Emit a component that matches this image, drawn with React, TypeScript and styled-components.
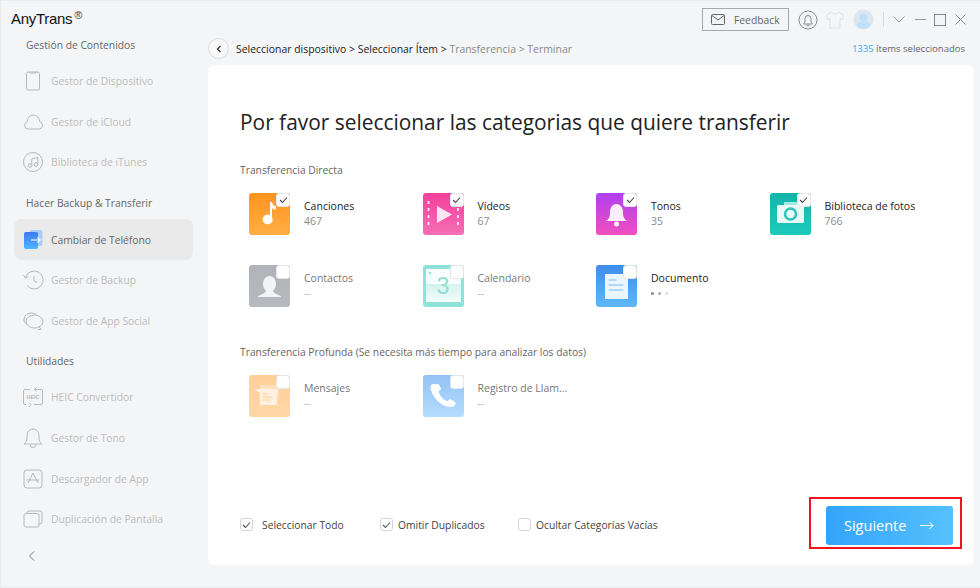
import { ReactNode } from "react";
import styled, { createGlobalStyle } from "styled-components";

const GlobalStyle = createGlobalStyle`
  html, body {
    margin: 0;
    padding: 0;
    background: #f4f5f7;
  }
  * {
    box-sizing: border-box;
  }
`;

const font = `"Open Sans", "Noto Sans", "Liberation Sans", sans-serif`;

function SideIcon({ children }: { children: ReactNode }) {
  return (
    <svg width="22" height="22" viewBox="0 0 22 22" fill="none" stroke="currentColor" strokeWidth="1">
      {children}
    </svg>
  );
}

const deviceIcon = (
  <SideIcon>
    <rect x="4.5" y="2" width="13" height="18" rx="1.5" />
    <path d="M8 2v1h6V2" />
  </SideIcon>
);
const cloudIcon = (
  <SideIcon>
    <path d="M5.5 18h11.5a3.6 3.6 0 0 0 .8-7.1A7 7 0 0 0 11 4a6.4 6.4 0 0 0-5.8 7A3.6 3.6 0 0 0 5.5 18z" />
  </SideIcon>
);
const musicIcon = (
  <SideIcon>
    <circle cx="11" cy="11" r="9.5" />
    <circle cx="8" cy="14.5" r="1.8" />
    <circle cx="14" cy="13.5" r="1.8" />
    <path d="M9.8 14.5V8l6-1.5v7" />
  </SideIcon>
);
const backupIcon = (
  <SideIcon>
    <path d="M3.5 8.5A9 9 0 1 1 5 16.5" />
    <path d="M1.5 6l2 3 3-1.5" />
    <path d="M12 7v5l3 1.5" />
  </SideIcon>
);
const socialIcon = (
  <SideIcon>
    <path d="M5 14.5C2.5 13 1.5 11 2 8.5 2.7 5 6 3 9.5 3c2.5 0 4.5 1 5.5 2.5" />
    <ellipse cx="12.5" cy="11.5" rx="8.5" ry="6.5" />
    <path d="M17 16.5l2 3h-3" />
  </SideIcon>
);
const heicIcon = (
  <SideIcon>
    <path d="M8 3.5H3a1.5 1.5 0 0 0-1.5 1.5v12A1.5 1.5 0 0 0 3 18.5h1M13 3.5h6A1.5 1.5 0 0 1 20.5 5v12a1.5 1.5 0 0 1-1.5 1.5h-7" />
    <path d="M14.5 1l-2 2.5 2 2M7 16.5l2 2-2 2.5" />
    <text x="11" y="13" fontFamily="Liberation Sans, sans-serif" fontSize="5.5" fontWeight="700" fill="currentColor" stroke="none" textAnchor="middle">
      HEIC
    </text>
  </SideIcon>
);
const bellIcon = (
  <SideIcon>
    <path d="M2 17c2-1.5 3-3 3-6V8a6 6 0 0 1 12 0v3c0 3 1 4.5 3 6z" />
    <path d="M8 17.5a3 3 0 0 0 6 0" />
  </SideIcon>
);
const storeIcon = (
  <SideIcon>
    <rect x="2" y="2" width="18" height="18" rx="3" />
    <path d="M11 5l-5 10M11 5l5 10M4.5 12h13" />
  </SideIcon>
);
const mirrorIcon = (
  <SideIcon>
    <rect x="2" y="5.5" width="15" height="13.5" rx="2" />
    <path d="M5 5.5V5a2 2 0 0 1 2-2h11a2 2 0 0 1 2 2v9a2 2 0 0 1-2 2h-1" />
  </SideIcon>
);
const phoneSwitchIcon = (
  <svg width="22" height="22" viewBox="0 0 22 22" fill="none">
    <defs>
      <linearGradient id="sw" x1="0" y1="0" x2="0" y2="1">
        <stop offset="0" stopColor="#3d79f2" />
        <stop offset="1" stopColor="#4fb6ff" />
      </linearGradient>
    </defs>
    <rect x="7.5" y="1" width="13" height="16" rx="2" fill="#a9cdf7" />
    <rect x="2" y="3" width="14" height="17" rx="2" fill="url(#sw)" />
    <path d="M9 11h9M15.5 8.5l2.5 2.5-2.5 2.5" stroke="#fff" strokeWidth="1.2" />
  </svg>
);

const songsArt = (
  <svg viewBox="0 0 41 41" width="41" height="41">
    <circle cx="18.7" cy="26.5" r="5" fill="#fff" />
    <path d="M21 27V9h2c.5 2.5 2 4 4 4.5v3c-1.5 0-3-.5-4-1.500V27z" fill="#fff" />
  </svg>
);
const videosArt = (
  <svg viewBox="0 0 41 41" width="41" height="41">
    <path d="M5.5 8v26M35 8v26" stroke="#fff" strokeWidth="1.6" strokeDasharray="3 4" />
    <path d="M14 13l15 8.5L14 30z" fill="#fff" opacity="0.85" />
  </svg>
);
const tonesArt = (
  <svg viewBox="0 0 41 41" width="41" height="41">
    <path d="M10 28c3-2 4-4 4-9 0-5 3-8 6.5-8S27 14 27 19c0 5 1 7 4 9z" fill="#fff" opacity="0.9" />
    <circle cx="20.5" cy="31" r="2.5" fill="#fff" opacity="0.9" />
  </svg>
);
const photosArt = (
  <svg viewBox="0 0 41 41" width="41" height="41">
    <rect x="14" y="9" width="15" height="3" fill="#9ee9e0" />
    <rect x="7" y="12" width="27" height="18" rx="1.5" fill="#e8faf7" />
    <circle cx="20.5" cy="21" r="5.5" fill="none" stroke="#2fc4b6" strokeWidth="2.5" />
  </svg>
);
const contactsArt = (
  <svg viewBox="0 0 41 41" width="41" height="41">
    <ellipse cx="20.5" cy="19" rx="6.5" ry="8" fill="#f3f4f5" />
    <path d="M8.5 32c3-3 8-3 9-7h6c1 4 6 4 9 7z" fill="#f3f4f5" />
  </svg>
);
const calendarArt = (
  <svg viewBox="0 0 41 41" width="41" height="41">
    <defs>
      <linearGradient id="cal" x1="0" y1="0" x2="0" y2="1">
        <stop offset="0" stopColor="#d3f3ee" />
        <stop offset="1" stopColor="#f4fdfb" />
      </linearGradient>
    </defs>
    <rect x="3" y="4" width="35" height="15" fill="#f6fdfc" />
    <rect x="3" y="19" width="35" height="18" fill="url(#cal)" />
    <circle cx="7" cy="8" r="1" fill="#6fd5c9" />
    <text x="20" y="29" fontFamily="Liberation Sans, sans-serif" fontSize="23" fill="#8fdfd6" textAnchor="middle">
      3
    </text>
  </svg>
);
const documentArt = (
  <svg viewBox="0 0 41 41" width="41" height="41">
    <rect x="9" y="9" width="23" height="25" fill="#eaf5fe" />
    <path d="M12.5 15h8M12.5 20h15M12.5 25h15" stroke="#7fbcf5" strokeWidth="1" />
  </svg>
);
const messagesArt = (
  <svg viewBox="0 0 41 41" width="41" height="41">
    <rect x="11" y="10" width="19" height="14" fill="#ffe0bc" />
    <path d="M5 14h23v16H11V18z" fill="#fff1df" />
    <path d="M13 19h6M13 22h11M13 25h8" stroke="#ffd09a" strokeWidth="1" />
  </svg>
);
const callsArt = (
  <svg viewBox="0 0 41 41" width="41" height="41">
    <path d="M10 9c-1 0-2 1-2.5 2.5C7 18 16 32 28 32c2 0 4-1 4.500-3 .2-1 0-2-1-2.500l-3.500-2c-1-.5-2-.2-2.500.5l-1 1.300c-4-1-8-6-9-10l1.500-1c1-.8 1-1.800.5-2.800l-2-3.500C12 9.500 11 9 10 9z" fill="#fff" />
  </svg>
);

const Shell = styled.div`
  width: 980px;
  height: 588px;
  display: grid;
  grid-template-columns: 207px 1fr;
  background: #f4f5f7;
  border: 1px solid #e9eaec;
  border-right: 0;
  font-family: ${font};
  overflow: hidden;
`;

const Sidebar = styled.aside`
  display: flex;
  flex-direction: column;
  padding-left: 13px;
  padding-right: 15px;
`;

const Logo = styled.div`
  height: 28px;
  margin-left: -3px;
  padding-top: 7px;
  font-family: "Liberation Sans", sans-serif;
  font-size: 15px;
  line-height: 22px;
  letter-spacing: -0.3px;
  color: #111;
  white-space: nowrap;

  sup {
    font-size: 11px;
    line-height: 0;
    margin-left: 2px;
    vertical-align: 5px;
    color: #444;
  }
`;

const GroupTitle = styled.div<{ $gap?: number }>`
  height: 32px;
  margin-top: ${(p) => p.$gap ?? 0}px;
  padding-left: 12px;
  font-size: 10.3px;
  line-height: 32px;
  color: #666;
`;

const NavItem = styled.div<{ $active?: boolean }>`
  height: 40.6px;
  display: flex;
  align-items: center;
  gap: 7px;
  padding-left: 8px;
  border-radius: 8px;
  font-size: 10.3px;
  color: ${(p) => (p.$active ? "#666" : "#bdbdbd")};
  background: ${(p) => (p.$active ? "#eaeaea" : "transparent")};

  svg {
    flex: none;
    color: #b8b8b8;
  }
`;

const CollapseRow = styled.div`
  margin-top: auto;
  height: 37px;
  padding-left: 13px;
  display: flex;
  align-items: flex-start;
  color: #777;
`;

const Main = styled.main`
  display: flex;
  flex-direction: column;
  padding-right: 6px;
  min-width: 0;
`;

const TitleBar = styled.div`
  height: 37px;
  padding-right: 8px;
  display: flex;
  align-items: center;
  justify-content: flex-end;
`;

const FeedbackButton = styled.button`
  width: 87px;
  height: 23px;
  padding: 0 0 0 8px;
  display: flex;
  align-items: center;
  gap: 9px;
  border: 1px solid #a9a9a9;
  background: #f4f5f7;
  font-family: ${font};
  font-size: 10.3px;
  color: #666;
`;

const BarIcon = styled.span<{ $left: number }>`
  display: flex;
  margin-left: ${(p) => p.$left}px;
  color: #8a8a8a;
`;

const Breadcrumb = styled.div`
  height: 27px;
  padding: 0 9px 6px 0;
  display: flex;
  align-items: center;
  justify-content: space-between;
  font-size: 10.45px;
  color: #222;
`;

const Trail = styled.div`
  display: flex;
  align-items: center;
  white-space: pre;
`;

const BackButton = styled.span`
  width: 21px;
  height: 21px;
  margin-right: 7px;
  display: flex;
  align-items: center;
  justify-content: center;
  border: 1px solid #dcdcdc;
  border-radius: 50%;
  background: #f8f8f8;
  color: #333;
`;

const MutedStep = styled.span`
  color: #8a8a8a;
`;

const Selected = styled.div`
  color: #666;
  font-size: 9.5px;

  b {
    font-weight: 400;
    color: #3aa7f5;
  }
`;

const Card = styled.section`
  flex: 1;
  display: flex;
  flex-direction: column;
  margin-bottom: 22px;
  padding: 42px 0 0 32px;
  background: #fff;
  border-radius: 6px;
`;

const Heading = styled.h1`
  margin: 0;
  font-size: 20.9px;
  line-height: 30px;
  font-weight: 400;
  color: #222;
`;

const SectionLabel = styled.div<{ $top: number }>`
  margin-top: ${(p) => p.$top}px;
  font-size: 10.3px;
  line-height: 16px;
  color: #666;
`;

const CategoryGrid = styled.div`
  margin-top: 15px;
  margin-left: 9px;
  display: grid;
  grid-template-columns: repeat(4, 173.5px);
  grid-auto-rows: 42px;
  row-gap: 30px;
`;

const Category = styled.div`
  display: flex;
  align-items: center;
  gap: 14px;
`;

const Tile = styled.div<{ $from: string; $to: string }>`
  position: relative;
  flex: none;
  width: 41px;
  height: 42px;
  border-radius: 3px;
  background: linear-gradient(${(p) => p.$from}, ${(p) => p.$to});

  svg {
    display: block;
  }
`;

const TileCheck = styled.span`
  position: absolute;
  top: 0;
  right: 0;
  width: 14px;
  height: 14px;
  display: flex;
  align-items: center;
  justify-content: center;
  background: #fff;
  border: 1px solid #e4e6e8;
  border-radius: 3px;
  color: #444;

  svg {
    display: block;
  }
`;

const CategoryText = styled.div`
  display: flex;
  flex-direction: column;
`;

const CategoryName = styled.div<{ $off?: boolean }>`
  font-size: 10.5px;
  line-height: 15px;
  color: ${(p) => (p.$off ? "#777" : "#1c1c1c")};
  white-space: nowrap;
`;

const CategoryCount = styled.div<{ $empty?: boolean }>`
  font-size: 10.5px;
  line-height: 15px;
  color: ${(p) => (p.$empty ? "#b5b5b5" : "#8a8a8a")};
`;

const Dots = styled.div`
  display: flex;
  gap: 4px;
  height: 15px;
  align-items: center;
`;

const Dot = styled.i<{ $shade: string }>`
  width: 3px;
  height: 3px;
  border-radius: 50%;
  background: ${(p) => p.$shade};
`;

const Footer = styled.div`
  margin-top: auto;
  margin-bottom: 16px;
  display: flex;
  align-items: center;
  justify-content: space-between;
  padding-right: 12px;
`;

const Options = styled.div`
  display: flex;
  align-items: center;
  padding-top: 3px;
`;

const Option = styled.label<{ $width: number; $gap: number }>`
  width: ${(p) => p.$width}px;
  display: flex;
  align-items: center;
  gap: ${(p) => p.$gap}px;
  font-size: 10.3px;
  color: #444;
  white-space: nowrap;
`;

const Box = styled.span`
  flex: none;
  width: 13px;
  height: 13px;
  display: flex;
  align-items: center;
  justify-content: center;
  border: 1px solid #d5d5d5;
  border-radius: 3px;
  background: #fff;
  color: #555;
`;

const Highlight = styled.div`
  padding: 7px 7px 2px 15px;
  border: 2px solid #f0141e;
`;

const NextButton = styled.button`
  width: 127px;
  height: 39px;
  padding: 0 19px 0 18px;
  display: flex;
  align-items: center;
  justify-content: space-between;
  border: 0;
  border-radius: 3px;
  background: linear-gradient(to right, #34a4fb, #55c1fd);
  color: #fff;
  font-family: ${font};
  font-size: 14.5px;
`;

const Check = () => (
  <svg width="9" height="8" viewBox="0 0 9 8" fill="none" stroke="currentColor" strokeWidth="1.1">
    <path d="M1 4l2.5 2.5L8 1.5" />
  </svg>
);

type Cat = {
  name: string;
  count?: string;
  on?: boolean;
  from: string;
  to: string;
  art: ReactNode;
  loading?: boolean;
};

const direct: Cat[] = [
  { name: "Canciones", count: "467", on: true, from: "#ff9320", to: "#ffae45", art: songsArt },
  { name: "Vídeos", count: "67", on: true, from: "#f53f9b", to: "#f46fb6", art: videosArt },
  { name: "Tonos", count: "35", on: true, from: "#b03ff2", to: "#f04fbd", art: tonesArt },
  { name: "Biblioteca de fotos", count: "766", on: true, from: "#14b5aa", to: "#1ecabb", art: photosArt },
  { name: "Contactos", count: "--", from: "#b0b3b7", to: "#b6b9bd", art: contactsArt },
  { name: "Calendario", count: "--", from: "#8fe1d9", to: "#8fe1d9", art: calendarArt },
  { name: "Documento", loading: true, from: "#3e8dea", to: "#5fb7f7", art: documentArt },
];

const deep: Cat[] = [
  { name: "Mensajes", count: "--", from: "#ffcf98", to: "#ffd7a8", art: messagesArt },
  { name: "Registro de Llam...", count: "--", from: "#93c2f5", to: "#b4dcfd", art: callsArt },
];

function CategoryCell({ cat }: { cat: Cat }) {
  return (
    <Category>
      <Tile $from={cat.from} $to={cat.to}>
        {cat.art}
        <TileCheck>{cat.on && <Check />}</TileCheck>
      </Tile>
      <CategoryText>
        <CategoryName $off={!cat.on && !cat.loading}>{cat.name}</CategoryName>
        {cat.loading ? (
          <Dots>
            <Dot $shade="#888" />
            <Dot $shade="#aaa" />
            <Dot $shade="#ddd" />
          </Dots>
        ) : (
          <CategoryCount $empty={!cat.on}>{cat.count}</CategoryCount>
        )}
      </CategoryText>
    </Category>
  );
}

export default function App() {
  return (
    <>
      <GlobalStyle />
      <Shell>
        <Sidebar>
          <Logo>
            AnyTrans<sup>®</sup>
          </Logo>
          <GroupTitle>Gestión de Contenidos</GroupTitle>
          <NavItem>{deviceIcon}Gestor de Dispositivo</NavItem>
          <NavItem>{cloudIcon}Gestor de iCloud</NavItem>
          <NavItem>{musicIcon}Biblioteca de iTunes</NavItem>
          <GroupTitle $gap={4.5}>Hacer Backup &amp; Transferir</GroupTitle>
          <NavItem $active>{phoneSwitchIcon}Cambiar de Teléfono</NavItem>
          <NavItem>{backupIcon}Gestor de Backup</NavItem>
          <NavItem>{socialIcon}Gestor de App Social</NavItem>
          <GroupTitle $gap={4}>Utilidades</GroupTitle>
          <NavItem>{heicIcon}HEIC Convertidor</NavItem>
          <NavItem>{bellIcon}Gestor de Tono</NavItem>
          <NavItem>{storeIcon}Descargador de App</NavItem>
          <NavItem>{mirrorIcon}Duplicación de Pantalla</NavItem>
          <CollapseRow>
            <svg width="10" height="12" viewBox="0 0 10 12" fill="none" stroke="currentColor">
              <path d="M7 1.5L2.5 6 7 10.5" />
            </svg>
          </CollapseRow>
        </Sidebar>
        <Main>
          <TitleBar>
            <FeedbackButton>
              <svg width="14" height="11" viewBox="0 0 14 11" fill="none" stroke="#666">
                <rect x="0.5" y="0.5" width="13" height="10" rx="1" />
                <path d="M1 1.5l6 4.5 6-4.5" />
              </svg>
              Feedback
            </FeedbackButton>
            <BarIcon $left={9}>
              <svg width="20" height="20" viewBox="0 0 20 20" fill="none" stroke="currentColor">
                <circle cx="10" cy="10" r="9" />
                <path d="M5.5 14c1-1 1.5-2 1.5-4V8.5a3 3 0 0 1 6 0V10c0 2 .5 3 1.5 4zM8.5 14.500a1.500 1.500 0 0 0 3 0" />
              </svg>
            </BarIcon>
            <BarIcon $left={8}>
              <svg width="18" height="18" viewBox="0 0 18 18" fill="none" stroke="#dfe1e3">
                <path d="M5.5 1L1 3.5v5l3-1v9.5h10V7.5l3 1v-5L12.5 1c-1 2.5-6 2.5-7 0z" />
              </svg>
            </BarIcon>
            <BarIcon $left={9}>
              <svg width="21" height="21" viewBox="0 0 21 21">
                <circle cx="10.5" cy="10.5" r="10" fill="#dbe6f0" />
                <circle cx="10.5" cy="8.5" r="4" fill="#bfe0fa" />
                <path d="M3.5 17c1-4 4-4.500 7-4.500s6 .5 7 4.500a10 10 0 0 1-14 0z" fill="#bfe0fa" />
              </svg>
            </BarIcon>
            <BarIcon $left={9}>
              <svg width="1" height="15">
                <rect width="1" height="15" fill="#dcdcdc" />
              </svg>
            </BarIcon>
            <BarIcon $left={9}>
              <svg width="12" height="7" viewBox="0 0 12 7" fill="none" stroke="#999">
                <path d="M.5.5L6 6l5.5-5.5" />
              </svg>
            </BarIcon>
            <BarIcon $left={10}>
              <svg width="11" height="11" viewBox="0 0 11 11" stroke="#999">
                <path d="M0 5.5h11" />
              </svg>
            </BarIcon>
            <BarIcon $left={8}>
              <svg width="12" height="12" viewBox="0 0 12 12" fill="none" stroke="#888">
                <rect x="0.5" y="0.5" width="11" height="11" />
              </svg>
            </BarIcon>
            <BarIcon $left={9}>
              <svg width="11" height="11" viewBox="0 0 11 11" stroke="#888">
                <path d="M.5.5l10 10M10.5.5l-10 10" />
              </svg>
            </BarIcon>
          </TitleBar>
          <Breadcrumb>
            <Trail>
              <BackButton>
                <svg width="6" height="8" viewBox="0 0 6 8" fill="none" stroke="currentColor" strokeWidth="1.2">
                  <path d="M4.5 1L1.5 4l3 3" />
                </svg>
              </BackButton>
              Seleccionar dispositivo &gt; Seleccionar Ítem &gt; <MutedStep>Transferencia &gt; Terminar</MutedStep>
            </Trail>
            <Selected>
              <b>1335</b> ítems seleccionados
            </Selected>
          </Breadcrumb>
          <Card>
            <Heading>Por favor seleccionar las categorias que quiere transferir</Heading>
            <SectionLabel $top={25}>Transferencia Directa</SectionLabel>
            <CategoryGrid>
              {direct.map((c) => (
                <CategoryCell key={c.name} cat={c} />
              ))}
            </CategoryGrid>
            <SectionLabel $top={37}>Transferencia Profunda (Se necesita más tiempo para analizar los datos)</SectionLabel>
            <CategoryGrid>
              {deep.map((c) => (
                <CategoryCell key={c.name} cat={c} />
              ))}
            </CategoryGrid>
            <Footer>
              <Options>
                <Option $width={140} $gap={9}>
                  <Box>
                    <Check />
                  </Box>
                  Seleccionar Todo
                </Option>
                <Option $width={138} $gap={5}>
                  <Box>
                    <Check />
                  </Box>
                  Omitir Duplicados
                </Option>
                <Option $width={150} $gap={5}>
                  <Box />
                  Ocultar Categorías Vacías
                </Option>
              </Options>
              <Highlight>
                <NextButton>
                  Siguiente
                  <svg width="14" height="9" viewBox="0 0 14 9" fill="none" stroke="#fff">
                    <path d="M0 4.5h13M9.5 1l3.5 3.5L9.5 8" />
                  </svg>
                </NextButton>
              </Highlight>
            </Footer>
          </Card>
        </Main>
      </Shell>
    </>
  );
}
